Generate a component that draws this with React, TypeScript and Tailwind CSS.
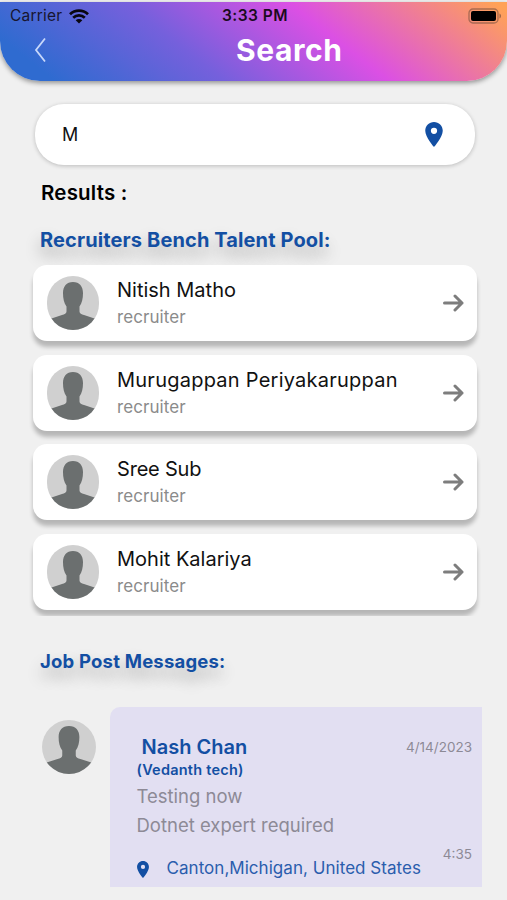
type AvatarProps = {
  className: string;
};

const recruiters = [
  { name: 'Nitish Matho', role: 'recruiter', tracking: 'tracking-normal' },
  { name: 'Murugappan Periyakaruppan', role: 'recruiter', tracking: 'tracking-[0.240px]' },
  { name: 'Sree Sub', role: 'recruiter', tracking: 'tracking-[-0.200px]' },
  { name: 'Mohit Kalariya', role: 'recruiter', tracking: 'tracking-normal' },
];

const Avatar = ({ className }: AvatarProps) => (
  <div className={`shrink-0 overflow-hidden rounded-full bg-[#d0d0d0] ${className}`}>
    <svg viewBox="0 0 52 54" preserveAspectRatio="none" className="block h-full w-full" fill="#6b6f6f">
      <path d="M26 6C32.500 6 36 10.500 36 17C36 22.500 35 27 32.500 30.500V35.500C32.500 37.500 34.500 38.200 37 39C41 40.300 45 41.500 49 43V54H3V43C7 41.500 11 40.300 15 39C17.500 38.200 19.500 37.500 19.500 35.500V30.500C17 27 16 22.500 16 17C16 10.500 19.500 6 26 6Z" />
    </svg>
  </div>
);

const Pin = ({ className }: { className: string }) => (
  <svg viewBox="5 2 14 20" className={`shrink-0 ${className}`} fill="#134fa3">
    <path d="M12 2C8.130 2 5 5.130 5 9c0 5.250 7 13 7 13s7-7.750 7-13c0-3.870-3.130-7-7-7zm0 9.500a2.500 2.500 0 1 1 0-5 2.500 2.500 0 0 1 0 5z" />
  </svg>
);

const StatusBar = () => (
  <div className="grid h-7 grid-cols-3 items-center pl-2.5 pr-[5px] text-black">
    <div className="flex items-center gap-[7px]">
      <span className="text-[15.5px] leading-none tracking-[0.2px] text-[#17152f]">Carrier</span>
      <svg viewBox="0 0 20 15" className="h-[15px] w-5" fill="none" stroke="#08060f" strokeWidth="2.7">
        <path d="M1 5.300C6 .4 14 .4 19 5.300" />
        <path d="M4.200 8.700C7.500 5.600 12.500 5.600 15.800 8.700" />
        <path d="M10 14.600L6.700 11.300C8.600 9.500 11.400 9.500 13.300 11.300Z" fill="#08060f" stroke="none" />
      </svg>
    </div>
    <span className="pr-0.5 text-center text-[15.5px] font-semibold leading-none tracking-[0.450px] text-[#1b0a20]">3:33 PM</span>
    <svg viewBox="0 0 34 16" className="h-4 w-[34px] justify-self-end">
      <rect x="1" y="1" width="29" height="14" rx="4" fill="none" stroke="#754e3d" strokeOpacity=".6" strokeWidth="1.300" />
      <rect x="3" y="3" width="25" height="10" rx="2" fill="#000" />
      <path d="M31.500 5.500C33.500 6.200 33.500 9.800 31.500 10.500Z" fill="#754e3d" fillOpacity=".7" />
    </svg>
  </div>
);

const Header = () => (
  <header className="h-[79px] rounded-b-[40px] bg-[linear-gradient(38deg,#2f6bd0_0%,#2f6bd0_9%,#7560dc_37%,#db50e4_64%,#ffa257_98%)] shadow-[0_2px_5px_rgba(0,0,0,0.4)]">
    <StatusBar />
    <div className="flex h-10 items-center">
      <svg viewBox="0 0 12 26" className="ml-[34px] h-[26px] w-3" fill="none" stroke="#c8d8fa" strokeWidth="1.800">
        <path d="M11 1.500L2 13L11 24.500" />
      </svg>
      <h1 className="ml-[190px] whitespace-nowrap text-[30px] font-bold leading-none tracking-[0.600px] text-white">Search</h1>
    </div>
  </header>
);

const RecruiterCard = ({ name, role, tracking }: (typeof recruiters)[number]) => (
  <li className="flex h-[76px] items-center rounded-[14px] bg-white pl-3.5 pr-[13px] shadow-[0_6px_4px_rgba(0,0,0,0.24)]">
    <Avatar className="h-[54px] w-[52px]" />
    <div className="ml-[18px] flex-1 whitespace-nowrap">
      <p className={`text-[20px] leading-7 text-[#111] ${tracking}`}>{name}</p>
      <p className="text-[17px] leading-[26px] tracking-[0.080px] text-[#8b8b8b]">{role}</p>
    </div>
    <svg viewBox="0 0 21 18" className="h-[18px] w-[21px]" fill="none" stroke="#7d7d7d" strokeWidth="3" strokeLinecap="round" strokeLinejoin="round">
      <path d="M1.500 9H19M12 2L19 9L12 16" />
    </svg>
  </li>
);

const JobMessage = () => (
  <article className="flex pl-[42px] pr-[25px]">
    <Avatar className="mt-[13px] h-[54px] w-[54px]" />
    <div className="ml-3.5 flex h-[180px] flex-1 flex-col whitespace-nowrap rounded-tl-[10px] bg-[#e2dff2] pl-[26.500px] pr-[10px] pt-[27px]">
      <div className="flex h-[26px] items-center justify-between">
        <h3 className="ml-[5px] text-[20px] font-semibold text-[#134fa3]">Nash Chan</h3>
        <span className="text-[13.500px] text-[#8d8a96]">4/14/2023</span>
      </div>
      <p className="text-[14.500px] font-semibold leading-5 tracking-[0.230px] text-[#134fa3]">(Vedanth tech)</p>
      <p className="mt-[2px] text-[18.500px] leading-[29px] text-[#8d8a96]">Testing now</p>
      <p className="text-[18.500px] leading-[29px] text-[#8d8a96]">Dotnet expert required</p>
      <div className="flex flex-1 justify-between">
        <div className="mt-4 flex h-[26px] items-center">
          <Pin className="h-[17px] w-3" />
          <span className="ml-[18px] text-[17px] tracking-[0.040px] text-[#2a5dad]">Canton,Michigan, United States</span>
        </div>
        <span className="mt-1 text-[13.500px] leading-5 text-[#8d8a96]">4:35</span>
      </div>
    </div>
  </article>
);

const App = () => (
  <main className="h-[900px] w-[507px] overflow-hidden bg-[#f0f0f0] pt-0.5 font-['Inter','Liberation_Sans',sans-serif]">
    <Header />
    <div className="ml-[35px] mt-[23px] flex h-[61px] w-[440px] items-center justify-between rounded-[29px] bg-white pl-[27px] pr-8 shadow-[0_1px_4px_rgba(0,0,0,0.22)]">
      <span className="text-[18px] text-[#111]">M</span>
      <Pin className="h-[25px] w-[18px]" />
    </div>
    <h2 className="ml-[41px] mt-[14px] h-7 text-[20.500px] font-semibold leading-7 tracking-[0.200px] text-black">Results :</h2>
    <h2 className="ml-10 mt-[19px] h-7 whitespace-nowrap text-[20px] font-bold leading-7 tracking-[0.120px] text-[#134fa3] [text-shadow:0_9px_16px_rgba(0,0,0,0.3)]">Recruiters Bench Talent Pool:</h2>
    <ul className="mt-[11px] flex h-[351px] flex-col gap-[13.600px] overflow-hidden pl-[33px] pr-[30px]">
      {recruiters.map((recruiter) => (
        <RecruiterCard key={recruiter.name} {...recruiter} />
      ))}
    </ul>
    <h2 className="ml-10 mt-[31px] h-7 whitespace-nowrap text-[18.500px] font-bold leading-7 tracking-[0.200px] text-[#134fa3] [text-shadow:0_9px_16px_rgba(0,0,0,0.3)]">Job Post Messages:</h2>
    <div className="mt-8">
      <JobMessage />
    </div>
  </main>
);

export default App;
